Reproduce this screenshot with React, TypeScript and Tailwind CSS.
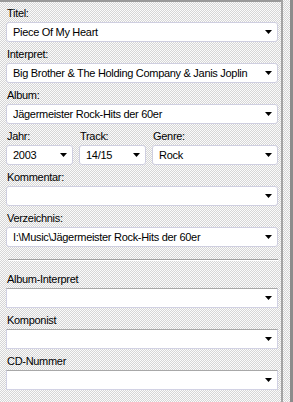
import React from 'react';

const dither =
  'bg-[repeating-conic-gradient(#d6d6d6_0_25%,#fbfbfb_0_50%)] bg-[length:2px_2px]';

function Arrow() {
  return (
    <svg width="7" height="4" viewBox="0 0 7 4" className="shrink-0">
      <path d="M0 0h7L3.5 4z" fill="#000" />
    </svg>
  );
}

function Combo({ value, lower }: { value?: string; lower?: boolean }) {
  return (
    <div
      className={`h-[20px] bg-white flex items-center pl-[6px] pr-[5px] border ${
        lower
          ? 'border-[#d2d2e4] border-t-[#a8a8a8]'
          : 'border-[#cfcfe0] rounded-[3px]'
      }`}
    >
      <span className="flex-1 truncate leading-[13px]">{value}</span>
      <Arrow />
    </div>
  );
}

function Field({
  label,
  value,
  lower,
  className = '',
}: {
  label: string;
  value?: string;
  lower?: boolean;
  className?: string;
}) {
  return (
    <div className={className}>
      <div className="h-[21px] flex items-end pb-[2px] pl-[1px] leading-[13px]">{label}</div>
      <Combo value={value} lower={lower} />
    </div>
  );
}

export default function App() {
  return (
    <div
      className="w-[293px] h-[402px] flex overflow-hidden text-[11px] tracking-[-0.3px] text-black"
      style={{ fontFamily: '"Liberation Sans", Arial, sans-serif' }}
    >
      {/* Main panel */}
      <div className={`w-[281px] h-full border-t-2 border-[#9a9a9a] pl-[6px] pr-[3px] ${dither}`}>
        <div className="-mt-[1px]">
          <Field label="Titel:" value="Piece Of My Heart" />
          <Field label="Interpret:" value="Big Brother & The Holding Company & Janis Joplin" />
          <Field label="Album:" value="Jägermeister Rock-Hits der 60er" />
          <div className="flex gap-[6px]">
            <Field label="Jahr:" value="2003" className="w-[67px]" />
            <Field label="Track:" value="14/15" className="w-[67px]" />
            <Field label="Genre:" value="Rock" className="flex-1" />
          </div>
          <Field label="Kommentar:" value="" />
          <Field label="Verzeichnis:" value="I:\Music\Jägermeister Rock-Hits der 60er" />
        </div>
        <div className="mt-[12px] ml-[2px] h-[2px] border-t border-[#a0a0a0] border-b border-b-white" />
        <div className="mt-[6px]">
          <Field label="Album-Interpret" lower />
          <Field label="Komponist" lower />
          <Field label="CD-Nummer" lower />
        </div>
      </div>
      {/* Right edge */}
      <div className="w-[2px] h-full bg-[#a4a4a4]" />
      <div className={`w-[7px] h-full ${dither}`} />
      <div className="w-[3px] h-full bg-[#8c8c8c]" />
    </div>
  );
}
